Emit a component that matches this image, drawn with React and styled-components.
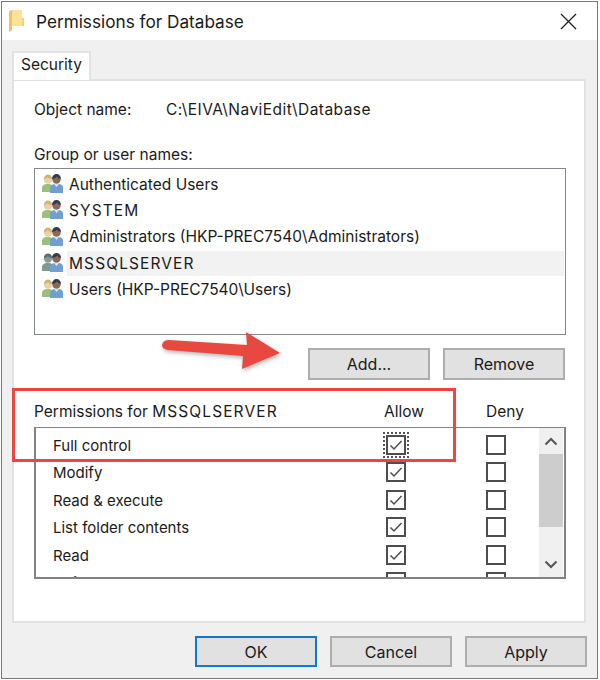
import React from 'react';
import styled, { createGlobalStyle } from 'styled-components';

const Global = createGlobalStyle`
  html, body {
    margin: 0;
    padding: 0;
    background: #fff;
  }
  * {
    box-sizing: border-box;
  }
`;

const Page = styled.div`
  position: relative;
  width: 600px;
  height: 680px;
  padding: 1px 2px 1px 1px;
  overflow: hidden;
  font-family: "Inter", "Open Sans", sans-serif;
  font-size: 15.5px;
  color: #1a1a1a;
`;

const Win = styled.div`
  height: 678px;
  width: 597px;
  background: #f0f0f0;
  border: 1px solid #777;
  display: flex;
  flex-direction: column;
`;

const TitleBar = styled.div`
  height: 38px;
  flex: none;
  background: #fff;
  display: flex;
  align-items: center;
  padding: 0 20px 0 7px;
`;

const Title = styled.div`
  font-size: 17.2px;
  margin-left: 11px;
  flex: 1;
`;

const Body = styled.div`
  flex: 1;
  padding: 11px 10px 0 10px;
  display: flex;
  flex-direction: column;
`;

const TabStrip = styled.div`
  height: 29px;
  flex: none;
  position: relative;
  z-index: 1;
`;

const Tab = styled.div`
  width: 79px;
  height: 29px;
  background: #fff;
  border: 2px solid #e2e2e2;
  border-bottom: 0;
  padding-bottom: 5px;
  display: flex;
  align-items: center;
  justify-content: center;
`;

const Panel = styled.div`
  height: 544px;
  width: 574px;
  margin-top: -1px;
  background: #fff;
  border: 2px solid #e2e2e2;
  padding: 17px 19px 0 20px;
  display: flex;
  flex-direction: column;
`;

const ObjectRow = styled.div`
  display: flex;
  height: 22px;
  align-items: center;
`;

const ObjectLabel = styled.div`
  width: 132px;
`;

const ObjectPath = styled.div`
  letter-spacing: 0.45px;
`;

const GroupLabel = styled.div`
  height: 22px;
  margin-top: 23px;
  display: flex;
  align-items: center;
`;

const UserList = styled.div`
  height: 167px;
  width: 532px;
  margin-top: 3px;
  border: 1px solid #828790;
  padding: 2px 1px 0 6px;
`;

const UserRow = styled.div`
  height: 26.3px;
  display: flex;
  align-items: center;
`;

const UserName = styled.div`
  flex: 1;
  height: 25px;
  margin-left: 2px;
  padding-left: 2px;
  display: flex;
  align-items: center;
  white-space: pre;
  background: ${props => (props.selected ? '#f2f2f2' : 'transparent')};
  letter-spacing: ${props => (props.caps ? '1.1px' : 'normal')};
`;

const ButtonRow = styled.div`
  display: flex;
  justify-content: flex-end;
  gap: 13px;
  margin-top: 13px;
`;

const Button = styled.div`
  width: 122px;
  height: 32px;
  font-size: 16px;
  background: #e1e1e1;
  border: ${props => (props.primary ? '2px solid #0f78d4' : '2px solid #adadad')};
  display: flex;
  align-items: center;
  justify-content: center;
`;

const PermHeader = styled.div`
  display: flex;
  align-items: center;
  height: 22px;
  margin-top: 20px;
`;

const PermTitle = styled.div`
  width: 350px;
  flex: none;
`;

const CapsWord = styled.span`
  letter-spacing: 1.1px;
`;

const PermCol = styled.div`
  width: 102px;
  flex: none;
  &:last-child {
    width: auto;
  }
`;

const PermBox = styled.div`
  height: 152px;
  width: 532px;
  margin-top: 5px;
  border: 2px solid #828282;
  border-top-width: 1px;
  display: flex;
  overflow: hidden;
`;

const PermRows = styled.div`
  flex: 1;
  min-width: 0;
  padding-top: 3px;
  overflow: hidden;
`;

const PermRow = styled.div`
  height: 27.5px;
  display: flex;
  align-items: center;
  padding-left: 17px;
`;

const PermName = styled.div`
  width: 333px;
  flex: none;
  font-size: 15px;
  padding-top: 1px;
`;

const CheckCell = styled.div`
  width: 100px;
  flex: none;
  display: flex;
`;

const Check = styled.div`
  width: 20px;
  height: 20px;
  border: 2px solid #4d4d4d;
  background: #fff;
  display: flex;
  align-items: center;
  justify-content: center;
  ${props => props.focused && `
    outline: 2px dotted #555;
    outline-offset: 1px;
  `}
`;

const Scrollbar = styled.div`
  width: 24px;
  margin-right: 1px;
  flex: none;
  background: #f0f0f0;
  display: flex;
  flex-direction: column;
  align-items: center;
`;

const ScrollArrow = styled.div`
  height: 26px;
  flex: none;
  display: flex;
  align-items: center;
  justify-content: center;
`;

const Thumb = styled.div`
  height: 73px;
  width: 100%;
  flex: none;
  background: #cdcdcd;
`;

const ScrollGap = styled.div`
  flex: 1;
`;

const Footer = styled.div`
  display: flex;
  justify-content: flex-end;
  gap: 13px;
  margin-top: 13px;
`;

const FooterButton = styled(Button)`
  height: 31px;
`;

const CloseBtn = styled.svg`
  flex: none;
`;

const Highlight = styled.div`
  position: absolute;
  left: 12px;
  top: 388px;
  width: 444px;
  height: 74px;
  border: 3px solid #ee4540;
`;

const Arrow = styled.svg`
  position: absolute;
  left: 155px;
  top: 325px;
  filter: drop-shadow(1px 2px 2px rgba(0, 0, 0, 0.3));
`;

const FolderIcon = () => (
  <svg width="16" height="22" viewBox="0 0 16 22">
    <path d="M3 0h10v8h2v8H3z" fill="#fae29a" />
    <path d="M13 8h2v8h-2z" fill="#f3cf70" />
    <path d="M0 1l3-1v20l-3 2z" fill="#eec25c" />
  </svg>
);

const UsersIcon = ({ selected }) => {
  const left = selected ? '#7d9a8f' : '#9cc07a';
  const face = selected ? '#8a9a9a' : '#ecd0a8';
  const hair = selected ? '#5d6f6f' : '#cfb478';
  return (
    <svg width="24" height="22" viewBox="0 0 24 22" style={{ flex: 'none' }}>
      <path d="M1 19v-4c0-3 3-4 5-4h2c2 0 4 1 4 4v4z" fill={left} />
      <circle cx="7" cy="6.5" r="4.2" fill={face} />
      <path d="M3 6c0-3 2-4.5 4-4.5S11 3 11 6C9 6 7 5 6.5 4 6 5 5 6 3 6z" fill={hair} />
      <path d="M9 20v-5c0-3 3-4 5-4h3c3 0 5 1 5 4v5z" fill="#6fa0cf" />
      <path d="M13 11l2.5 3 2.5-3z" fill="#d8e6f2" />
      <circle cx="15.5" cy="6.5" r="4.2" fill="#8a6a52" />
      <path d="M11 6c0-3 2-5 4.5-5S20 3 20 6c-2-.5-3-1-4-2.500C15 5 13 6 11 6z" fill="#2e3c50" />
    </svg>
  );
};

const users = [
  { name: 'Authenticated Users' },
  { name: 'SYSTEM', caps: true },
  { name: 'Administrators (HKP-PREC7540\\Administrators)' },
  { name: 'MSSQLSERVER', selected: true, caps: true },
  { name: 'Users (HKP-PREC7540\\Users)' },
];

const perms = ['Full control', 'Modify', 'Read & execute', 'List folder contents', 'Read', 'Write'];

const Tick = () => (
  <svg width="14" height="14" viewBox="0 0 14 14">
    <path d="M1.5 7.5l3.500 3.500 7.500-8" fill="none" stroke="#4d4d4d" strokeWidth="1.500" />
  </svg>
);

export default function App() {
  return (
    <>
      <Global />
      <Page>
        <Win>
          <TitleBar>
            <FolderIcon />
            <Title>Permissions for Database</Title>
            <CloseBtn width="17" height="17" viewBox="0 0 17 17">
              <path d="M1 1l15 15M16 1L1 16" stroke="#222" strokeWidth="1.300" />
            </CloseBtn>
          </TitleBar>
          <Body>
            <TabStrip>
              <Tab>Security</Tab>
            </TabStrip>
            <Panel>
              <ObjectRow>
                <ObjectLabel>Object name:</ObjectLabel>
                <ObjectPath>C:\EIVA\NaviEdit\Database</ObjectPath>
              </ObjectRow>
              <GroupLabel>Group or user names:</GroupLabel>
              <UserList>
                {users.map(u => (
                  <UserRow key={u.name}>
                    <UsersIcon selected={u.selected} />
                    <UserName selected={u.selected} caps={u.caps}>{u.name}</UserName>
                  </UserRow>
                ))}
              </UserList>
              <ButtonRow>
                <Button>Add...</Button>
                <Button>Remove</Button>
              </ButtonRow>
              <PermHeader>
                <PermTitle>Permissions for <CapsWord>MSSQLSERVER</CapsWord></PermTitle>
                <PermCol>Allow</PermCol>
                <PermCol>Deny</PermCol>
              </PermHeader>
              <PermBox>
                <PermRows>
                  {perms.map((p, i) => (
                    <PermRow key={p}>
                      <PermName>{p}</PermName>
                      <CheckCell>
                        <Check focused={i === 0}>{i < 5 && <Tick />}</Check>
                      </CheckCell>
                      <CheckCell>
                        <Check />
                      </CheckCell>
                    </PermRow>
                  ))}
                </PermRows>
                <Scrollbar>
                  <ScrollArrow>
                    <svg width="14" height="9" viewBox="0 0 14 9">
                      <path d="M1.500 7.500L7 2l5.500 5.500" fill="none" stroke="#555" strokeWidth="2" />
                    </svg>
                  </ScrollArrow>
                  <Thumb />
                  <ScrollGap />
                  <ScrollArrow>
                    <svg width="14" height="9" viewBox="0 0 14 9">
                      <path d="M1.500 1.500L7 7l5.500-5.500" fill="none" stroke="#555" strokeWidth="2" />
                    </svg>
                  </ScrollArrow>
                </Scrollbar>
              </PermBox>
            </Panel>
            <Footer>
              <FooterButton primary>OK</FooterButton>
              <FooterButton>Cancel</FooterButton>
              <FooterButton>Apply</FooterButton>
            </Footer>
          </Body>
        </Win>
        <Highlight />
        <Arrow width="135" height="50" viewBox="0 0 135 50">
          <path d="M14 15L92 20 91 7 125 28 87 44 88 31 13 25Q7 24 7 20 8 15 14 15z" fill="#e8483f" />
        </Arrow>
      </Page>
    </>
  );
}
